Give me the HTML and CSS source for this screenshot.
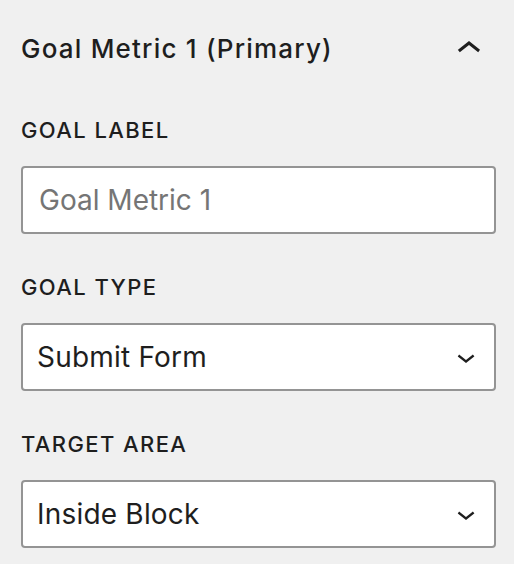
FILE: index.html
```html
<!DOCTYPE html>
<html lang="en">
<head>
<meta charset="utf-8">
<title>Goal Metric</title>
<link rel="stylesheet" href="styles.css">
</head>
<body>
<div class="panel">
  <div class="panel-header">
    <h2 class="panel-title">Goal Metric 1 (Primary)</h2>
    <svg class="toggle-icon" viewBox="0 0 24 24" aria-hidden="true"><path d="M6.5 12.4L12 8l5.5 4.4-.9 1.2L12 10l-4.6 3.6-1-1.2z"/></svg>
  </div>
  <div class="fields">
    <div class="field">
      <label class="field-label" for="goal-label">Goal Label</label>
      <input class="text-input" id="goal-label" type="text" placeholder="Goal Metric 1">
    </div>
    <div class="field">
      <label class="field-label" for="goal-type">Goal Type</label>
      <div class="select-wrap">
        <select class="select" id="goal-type">
          <option>Submit Form</option>
        </select>
        <svg class="select-icon" viewBox="0 0 24 24" aria-hidden="true"><path d="M17.5 11.6L12 16l-5.5-4.4.9-1.2L12 14l4.6-3.6 1 1.2z"/></svg>
      </div>
    </div>
    <div class="field">
      <label class="field-label" for="target-area">Target Area</label>
      <div class="select-wrap">
        <select class="select" id="target-area">
          <option>Inside Block</option>
        </select>
        <svg class="select-icon" viewBox="0 0 24 24" aria-hidden="true"><path d="M17.5 11.6L12 16l-5.5-4.4.9-1.2L12 14l4.6-3.6 1 1.2z"/></svg>
      </div>
    </div>
  </div>
</div>
</body>
</html>
```

FILE: styles.css
```css
html, body {
  margin: 0;
  background: #f0f0f0;
}

body {
  font-family: Inter, "Noto Sans", sans-serif;
  color: #1e1e1e;
}

.panel {
  padding: 0 18px 0 21px;
}

.panel-header {
  display: flex;
  justify-content: space-between;
  align-items: flex-start;
  padding-top: 25px;
  margin-right: 3px;
}

.panel-title {
  margin: 8px 0 0;
  font-size: 26px;
  line-height: 32px;
  font-weight: 500;
  letter-spacing: 1.2px;
}

.toggle-icon {
  display: block;
  width: 48px;
  height: 48px;
  fill: #1e1e1e;
}

.fields {
  display: flex;
  flex-direction: column;
  gap: 41px;
  margin-top: 45px;
}

.field {
  display: flex;
  flex-direction: column;
  gap: 24px;
}

.field-label {
  display: block;
  font-size: 22px;
  line-height: 24px;
  font-weight: 500;
  letter-spacing: 1.4px;
  text-transform: uppercase;
}

.text-input {
  box-sizing: border-box;
  display: block;
  width: 100%;
  height: 68px;
  margin: 0;
  padding: 0 16px;
  border: 2px solid #949494;
  border-radius: 4px;
  background: #fff;
  font-family: Inter, "Noto Sans", sans-serif;
  font-size: 28px;
  font-weight: 400;
  color: #1e1e1e;
  outline: none;
}

.text-input::placeholder {
  color: #757575;
  opacity: 1;
}

.select-wrap {
  box-sizing: border-box;
  display: flex;
  align-items: center;
  height: 68px;
  padding-right: 10px;
  border: 2px solid #949494;
  border-radius: 4px;
  background: #fff;
}

.select {
  flex: 1;
  min-width: 0;
  height: 100%;
  margin: 0;
  padding: 0 14px;
  border: 0;
  background: transparent;
  -webkit-appearance: none;
  appearance: none;
  font-family: Inter, "Noto Sans", sans-serif;
  font-size: 28px;
  font-weight: 400;
  letter-spacing: 0.2px;
  color: #1e1e1e;
  outline: none;
}

.select-icon {
  display: block;
  flex: none;
  width: 36px;
  height: 36px;
  fill: #1e1e1e;
}
```
